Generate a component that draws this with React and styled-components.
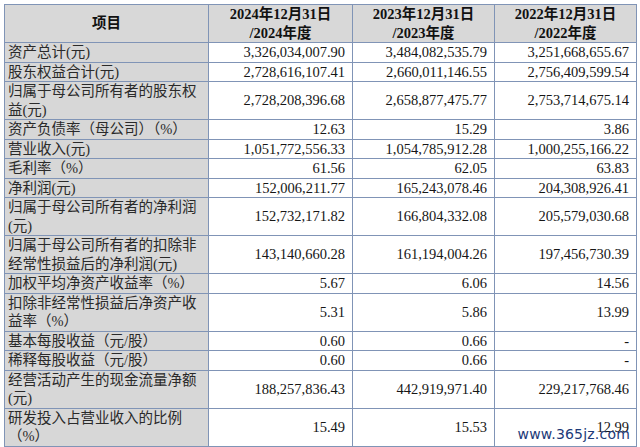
import React from "react";
import styled, { createGlobalStyle } from "styled-components";

const GlobalStyle = createGlobalStyle`
  html, body {
    margin: 0;
    padding: 0;
    background: #fff;
  }
`;

const rows = [
  { label: ["资产总计(元)"], values: ["3,326,034,007.90", "3,484,082,535.79", "3,251,668,655.67"] },
  { label: ["股东权益合计(元)"], values: ["2,728,616,107.41", "2,660,011,146.55", "2,756,409,599.54"] },
  { label: ["归属于母公司所有者的股东权", "益(元)"], values: ["2,728,208,396.68", "2,658,877,475.77", "2,753,714,675.14"] },
  { label: ["资产负债率（母公司）（%）"], values: ["12.63", "15.29", "3.86"] },
  { label: ["营业收入(元)"], values: ["1,051,772,556.33", "1,054,785,912.28", "1,000,255,166.22"] },
  { label: ["毛利率（%）"], values: ["61.56", "62.05", "63.83"] },
  { label: ["净利润(元)"], values: ["152,006,211.77", "165,243,078.46", "204,308,926.41"] },
  { label: ["归属于母公司所有者的净利润", "(元)"], values: ["152,732,171.82", "166,804,332.08", "205,579,030.68"] },
  { label: ["归属于母公司所有者的扣除非", "经常性损益后的净利润(元)"], values: ["143,140,660.28", "161,194,004.26", "197,456,730.39"] },
  { label: ["加权平均净资产收益率（%）"], values: ["5.67", "6.06", "14.56"] },
  { label: ["扣除非经常性损益后净资产收", "益率（%）"], values: ["5.31", "5.86", "13.99"] },
  { label: ["基本每股收益（元/股）"], values: ["0.60", "0.66", "-"] },
  { label: ["稀释每股收益（元/股）"], values: ["0.60", "0.66", "-"] },
  { label: ["经营活动产生的现金流量净额", "(元)"], values: ["188,257,836.43", "442,919,971.40", "229,217,768.46"] },
  { label: ["研发投入占营业收入的比例", "（%）"], values: ["15.49", "15.53", "12.99"] },
];

const years = ["2024", "2023", "2022"];

const Page = styled.div`
  padding: 4px 0 0 4px;
`;

const Table = styled.table`
  border-collapse: collapse;
  table-layout: fixed;
  width: 632px;
  font-family: "Liberation Serif", "Noto Sans CJK SC", serif;
  font-size: 14.5px;
  line-height: 18.5px;
  color: #161616;
`;

const Cell = styled.td`
  border: 1px solid #8094b6;
  padding: 0;
  vertical-align: middle;
  white-space: nowrap;
`;

const HeadCell = styled(Cell).attrs({ as: "th" })`
  background: #d8d8d8;
  font-weight: bold;
  text-align: center;
  height: 37px;
  color: #111;
`;

const LabelCell = styled(Cell)`
  background: #d7d7d7;
  text-align: left;
  padding-left: 3px;
  color: #2a2a2a;
`;

const ValueCell = styled(Cell)`
  background: #fff;
  text-align: right;
  padding-right: 7px;
  position: relative;
`;

const Line = styled.div`
  display: block;
`;

const Watermark = styled.span`
  position: absolute;
  right: 6px;
  bottom: 4px;
  font-family: "DejaVu Sans", sans-serif;
  font-size: 14px;
  line-height: 16px;
  color: #1d3a78;
  letter-spacing: 0.2px;
`;

export default function App() {
  return (
    <Page>
      <GlobalStyle />
      <Table>
        <colgroup>
          <col style={{ width: 204 }} />
          <col style={{ width: 144 }} />
          <col style={{ width: 142 }} />
          <col style={{ width: 142 }} />
        </colgroup>
        <thead>
          <tr>
            <HeadCell>项目</HeadCell>
            {years.map((y) => (
              <HeadCell key={y}>
                <Line>{y}年12月31日</Line>
                <Line>/{y}年度</Line>
              </HeadCell>
            ))}
          </tr>
        </thead>
        <tbody>
          {rows.map((row, i) => (
            <tr key={i}>
              <LabelCell>
                {row.label.map((l, j) => (
                  <Line key={j}>{l}</Line>
                ))}
              </LabelCell>
              {row.values.map((v, j) => (
                <ValueCell key={j}>
                  {v}
                  {i === rows.length - 1 && j === 2 && <Watermark>www.365jz.com</Watermark>}
                </ValueCell>
              ))}
            </tr>
          ))}
        </tbody>
      </Table>
    </Page>
  );
}
